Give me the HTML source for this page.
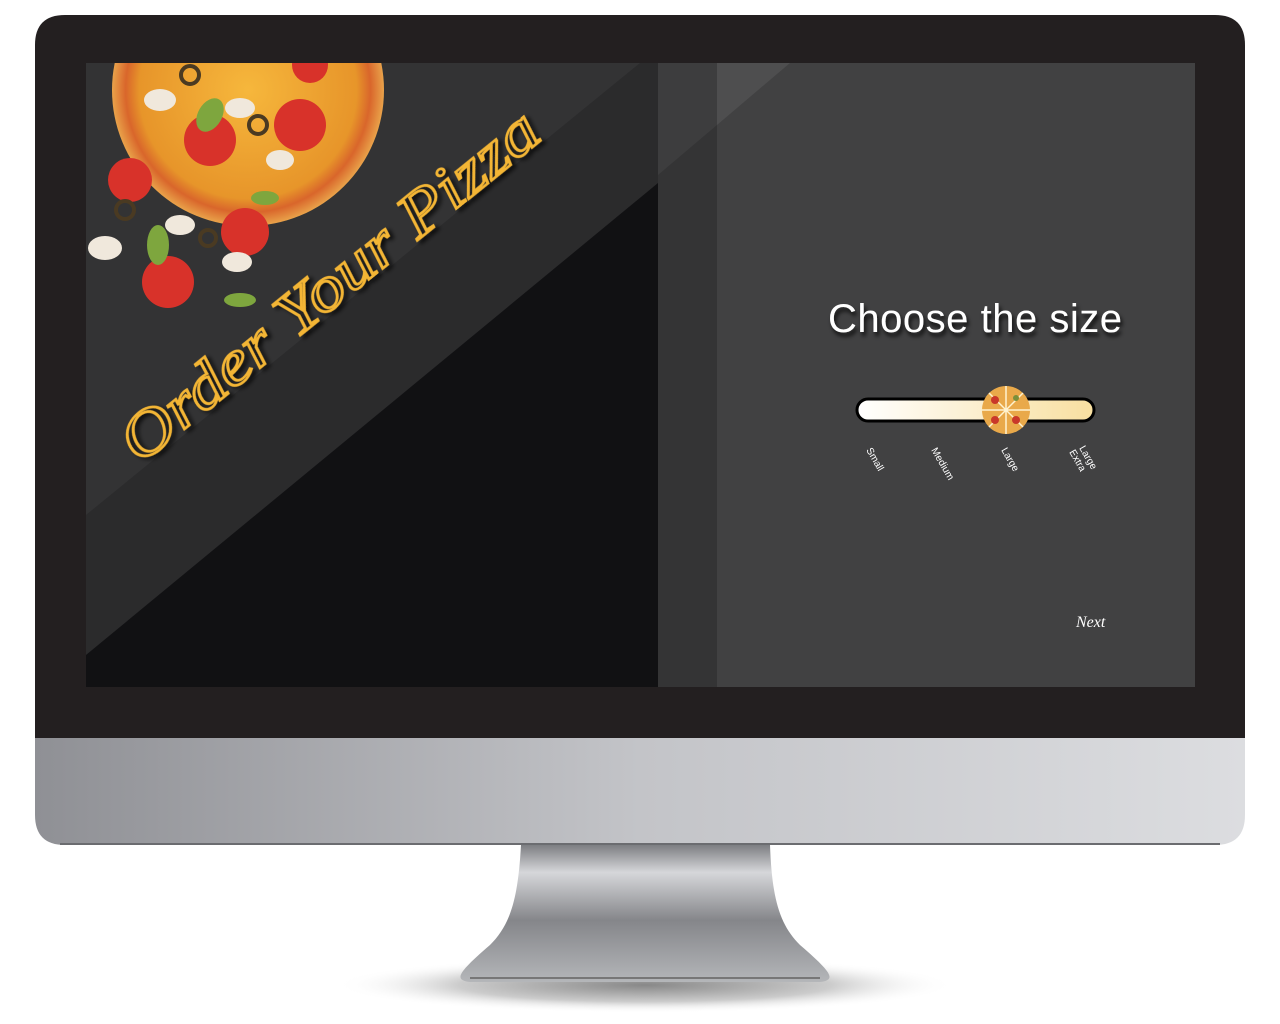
<!DOCTYPE html>
<html><head><meta charset="utf-8"><style>
html,body{margin:0;padding:0;background:#fff;width:1280px;height:1024px;overflow:hidden}
svg{display:block}
</style></head><body>
<svg width="1280" height="1024" viewBox="0 0 1280 1024" xmlns="http://www.w3.org/2000/svg">
<defs>
<linearGradient id="chin" x1="0" x2="1"><stop offset="0" stop-color="#8f9095"/><stop offset="0.5" stop-color="#c3c4c8"/><stop offset="1" stop-color="#dcdde0"/></linearGradient>
<linearGradient id="neck" x1="0" y1="0" x2="0" y2="1"><stop offset="0" stop-color="#7d7e82"/><stop offset="0.2" stop-color="#d6d7da"/><stop offset="0.55" stop-color="#85868a"/><stop offset="1" stop-color="#b4b6b9"/></linearGradient>
<radialGradient id="shadow" cx="0.5" cy="0.5" r="0.5"><stop offset="0" stop-color="#888"/><stop offset="0.6" stop-color="#ccc"/><stop offset="1" stop-color="#fff" stop-opacity="0"/></radialGradient>
<linearGradient id="bar" x1="0" x2="1"><stop offset="0" stop-color="#fff"/><stop offset="1" stop-color="#f8dfa0"/></linearGradient>
<radialGradient id="pz" cx="0.5" cy="0.5" r="0.5"><stop offset="0" stop-color="#f6b73c"/><stop offset="0.8" stop-color="#e7952a"/><stop offset="0.9" stop-color="#d9662b"/><stop offset="1" stop-color="#e9a24a"/></radialGradient>
<filter id="ts"><feDropShadow dx="2" dy="4" stdDeviation="2" flood-color="#000" flood-opacity="0.8"/></filter>
<clipPath id="scr"><rect x="86" y="63" width="1109" height="624"/></clipPath>
</defs>
<ellipse cx="645" cy="985" rx="310" ry="28" fill="url(#shadow)"/>
<path d="M521 845 L770 845 C772 900 780 925 800 945 C835 975 835 980 820 982 L470 982 C455 980 455 975 490 945 C510 925 518 900 521 845 Z" fill="url(#neck)"/>
<path d="M470 978 L820 978" stroke="#777" stroke-width="2"/>
<path d="M35 738 L1245 738 L1245 815 Q1245 845 1215 845 L65 845 Q35 845 35 815 Z" fill="url(#chin)"/>
<path d="M60 844 L1220 844" stroke="#6b6c70" stroke-width="2"/>
<path d="M65 15 L1215 15 Q1245 15 1245 45 L1245 738 L35 738 L35 45 Q35 15 65 15 Z" fill="#231f20"/>
<g clip-path="url(#scr)">
<rect x="86" y="63" width="572" height="624" fill="#2b2b2c"/>
<polygon points="86,515 86,63 640,63" fill="#333334"/>
<polygon points="86,655 658,183 658,687 86,687" fill="#111113"/>
<rect x="658" y="63" width="59" height="624" fill="#343435"/>
<rect x="717" y="63" width="478" height="624" fill="#414142"/>
<polygon points="717,63 790,63 717,125" fill="#4e4e4f"/>
<polygon points="658,63 717,63 717,125 658,175" fill="#3d3d3e"/>
<g>
<circle cx="248" cy="90" r="136" fill="url(#pz)"/>
<circle cx="210" cy="140" r="26" fill="#d8322a"/><circle cx="300" cy="125" r="26" fill="#d8322a"/>
<circle cx="130" cy="180" r="22" fill="#d8322a"/><circle cx="245" cy="232" r="24" fill="#d8322a"/>
<circle cx="168" cy="282" r="26" fill="#d8322a"/>
<circle cx="310" cy="65" r="18" fill="#d8322a"/>
<ellipse cx="160" cy="100" rx="16" ry="11" fill="#f0e8dc"/><ellipse cx="240" cy="108" rx="15" ry="10" fill="#f0e8dc"/>
<ellipse cx="280" cy="160" rx="14" ry="10" fill="#f0e8dc"/><ellipse cx="105" cy="248" rx="17" ry="12" fill="#f0e8dc"/>
<ellipse cx="237" cy="262" rx="15" ry="10" fill="#f0e8dc"/><ellipse cx="180" cy="225" rx="15" ry="10" fill="#f0e8dc"/>
<ellipse cx="210" cy="115" rx="12" ry="18" fill="#7ea63e" transform="rotate(30 210 115)"/>
<ellipse cx="158" cy="245" rx="11" ry="20" fill="#7ea63e"/>
<ellipse cx="240" cy="300" rx="16" ry="7" fill="#7ea63e"/><ellipse cx="265" cy="198" rx="14" ry="7" fill="#7ea63e"/>
<circle cx="258" cy="125" r="9" fill="none" stroke="#4a3a22" stroke-width="4"/><circle cx="125" cy="210" r="9" fill="none" stroke="#4a3a22" stroke-width="4"/>
<circle cx="190" cy="75" r="9" fill="none" stroke="#4a3a22" stroke-width="4"/><circle cx="208" cy="238" r="8" fill="none" stroke="#4a3a22" stroke-width="4"/>
</g>
</g>
<text x="0" y="0" transform="translate(140 465) rotate(-39)" font-family="Liberation Serif, serif" font-style="italic" font-size="62" textLength="520" lengthAdjust="spacingAndGlyphs" fill="none" stroke="#f3b534" stroke-width="2.5" filter="url(#ts)">Order Your Pizza</text>
<text x="975" y="332" text-anchor="middle" font-family="Liberation Sans, sans-serif" font-size="40" textLength="294" fill="#fff" filter="url(#ts)">Choose the size</text>
<rect x="857" y="399" width="237" height="22" rx="11" fill="url(#bar)" stroke="#000" stroke-width="3"/>
<circle cx="1006" cy="410" r="24" fill="#e9a94a"/>
<g stroke="#fff3d0" stroke-width="1.5"><path d="M1006 386 L1006 434 M982 410 L1030 410 M989 393 L1023 427 M1023 393 L989 427"/></g>
<circle cx="995" cy="400" r="4" fill="#c9382a"/><circle cx="1016" cy="420" r="4" fill="#c9382a"/><circle cx="1016" cy="398" r="3" fill="#7a8f3a"/><circle cx="995" cy="420" r="4" fill="#c9382a"/>
<g font-family="Liberation Sans, sans-serif" font-size="10" fill="#fff">
<text transform="translate(866 450) rotate(60)">Small</text>
<text transform="translate(931 450) rotate(60)">Medium</text>
<text transform="translate(1001 450) rotate(60)">Large</text>
<text transform="translate(1079 448) rotate(60)">Large</text>
<text transform="translate(1069 452) rotate(60)">Extra</text>
</g>
<text x="1076" y="627" font-family="Liberation Serif, serif" font-style="italic" font-size="16" fill="#fff">Next</text>
</svg>
</body></html>
